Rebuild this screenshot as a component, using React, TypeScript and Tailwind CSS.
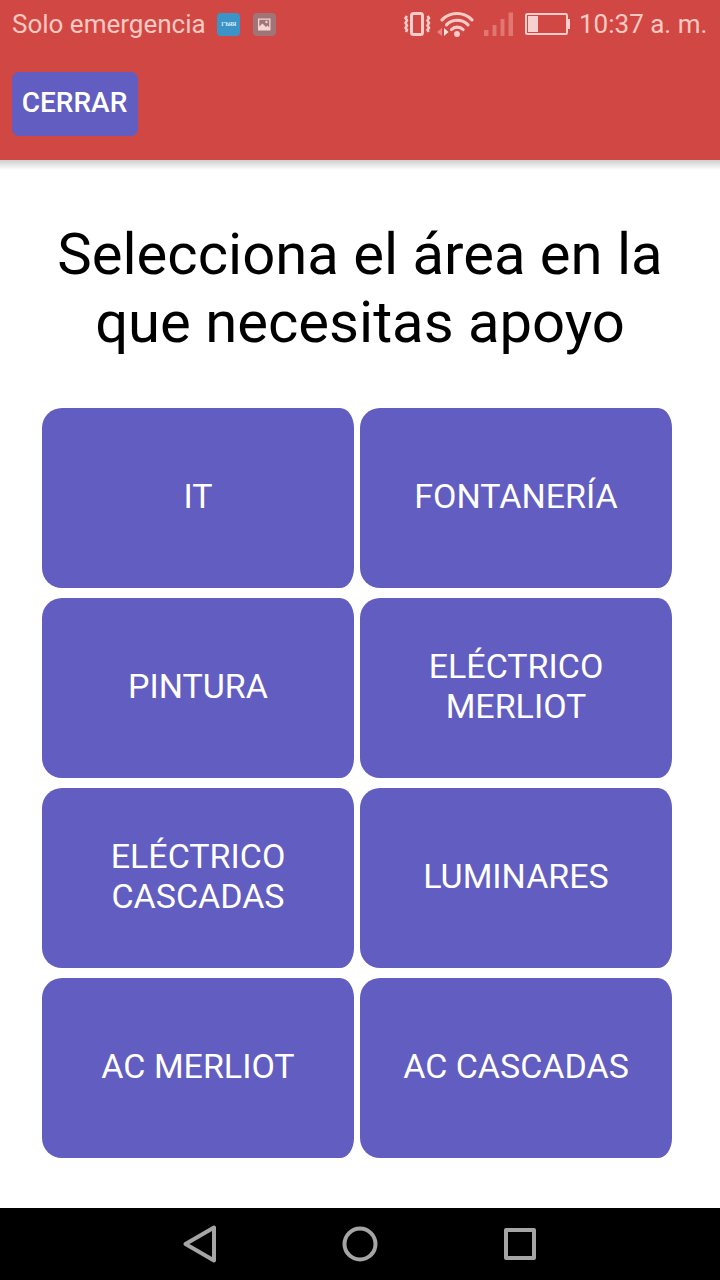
type AreaButtonProps = {
  label: string;
};

const AREAS = [
  "IT",
  "FONTANERÍA",
  "PINTURA",
  "ELÉCTRICO MERLIOT",
  "ELÉCTRICO CASCADAS",
  "LUMINARES",
  "AC MERLIOT",
  "AC CASCADAS",
];

function AreaButton({ label }: AreaButtonProps) {
  return (
    <button className="flex h-[180px] w-[312px] items-center justify-center rounded-[20px_14px_14px_20px/20px] bg-[#625dc0] px-10 pb-[5px] text-center text-[34px] leading-[40px] text-white">
      {label}
    </button>
  );
}

function StatusBar() {
  return (
    <div className="flex h-12 items-center text-[26px] leading-[30px] text-[#ffc9c2]">
      <span className="ml-3 w-[205px] whitespace-nowrap">Solo emergencia</span>
      <span className="flex h-[23px] w-[23px] items-center justify-center rounded-[4px] bg-[#3b93c8] font-['Liberation_Serif',serif] text-[6px] leading-none font-bold tracking-[-0.5px] text-[#d5ecf8]">
        ГЪЯЯ
      </span>
      <svg className="ml-[13px]" width="23" height="23" viewBox="0 0 23 23">
        <rect width="23" height="23" rx="4" fill="#a17478" />
        <path
          fillRule="evenodd"
          fill="#f2d5d5"
          d="M5 5.500h12.500v12H5zM6.300 6.800v6.700l3.200-3 3.500 3.500 1.500-1.500 1.700 2V6.800z"
        />
        <circle cx="13.500" cy="9" r="1.200" fill="#f2d5d5" />
      </svg>

      {/* vibration, wifi, signal, battery */}
      <svg className="ml-[125px]" width="174" height="48" viewBox="0 0 174 48">
        <g transform="translate(-401 0)">
          <rect x="411.500" y="13.500" width="11" height="21" rx="2" fill="none" stroke="#ffcdc9" strokeWidth="3" />
          <path
            d="M407 16l-1.500 2 1.500 2.500-1.500 2.500 1.500 2.500-1.500 2.500 1.500 2-1 2M427.500 16l1.500 2-1.500 2.500 1.500 2.500-1.500 2.500 1.500 2.500-1.500 2 1 2"
            fill="none"
            stroke="#ffcdc9"
            strokeWidth="2.500"
          />
          <g fill="none" stroke="#ffcdc9" strokeWidth="3.200" strokeLinecap="round">
            <path d="M442 19.800a21 21 0 0 1 30 0" />
            <path d="M446.500 24.800a15 15 0 0 1 21.500 0" />
            <path d="M451.500 29.500a8 8 0 0 1 11.500 0" />
          </g>
          <circle cx="457" cy="34" r="2.900" fill="#ffcdc9" />
          <path d="M442 28v8l-5-4z" fill="#e88481" />
          <path d="M444 28v8l4.500-4z" fill="#ffe1de" />
          <path
            d="M484 30h4.500v6H484zM492.500 25h4v11h-4zM500.500 19h4v17h-4zM508.500 12.500h4.500V36h-4.500z"
            fill="#e27672"
          />
          <rect x="526" y="14" width="41" height="20" rx="1.500" fill="none" stroke="#ffcdc9" strokeWidth="2" />
          <path d="M528 16h10v16h-10zM568 19h2v10h-2z" fill="#f6d1d0" />
        </g>
      </svg>
      <span className="ml-[4px] whitespace-nowrap">10:37 a. m.</span>
    </div>
  );
}

function NavigationBar() {
  return (
    <nav className="h-[72px] bg-black">
      <svg width="720" height="72" fill="none" stroke="#a5a5a5" strokeWidth="4" strokeLinejoin="round">
        <path d="M185.500 36L214 19.500v33z" />
        <circle cx="360" cy="36" r="15.500" />
        <rect x="506" y="22" width="28" height="28" />
      </svg>
    </nav>
  );
}

export default function App() {
  return (
    <div className="flex h-[1280px] w-[720px] flex-col overflow-hidden bg-white font-[Roboto,sans-serif]">
      <header className="h-40 shrink-0 bg-[#d14743]">
        <StatusBar />
        <button className="mt-6 ml-3 flex h-16 w-[126px] items-center justify-center rounded-[7px] bg-[#625dc0] pr-[1px] pb-[3px] text-[28px] leading-8 font-medium text-white">
          CERRAR
        </button>
      </header>
      <div className="h-[10px] shrink-0 bg-linear-to-b from-[#cecece] to-white" />

      <main className="flex-1">
        <h1 className="mt-[50px] text-center text-[58px] leading-[68px] text-black">
          Selecciona el área en la
          <br />
          que necesitas apoyo
        </h1>
        <div className="mt-[52px] ml-[42px] grid w-[630px] grid-cols-2 gap-x-[6px] gap-y-[10px]">
          {AREAS.map((area) => (
            <AreaButton key={area} label={area} />
          ))}
        </div>
      </main>

      <NavigationBar />
    </div>
  );
}
